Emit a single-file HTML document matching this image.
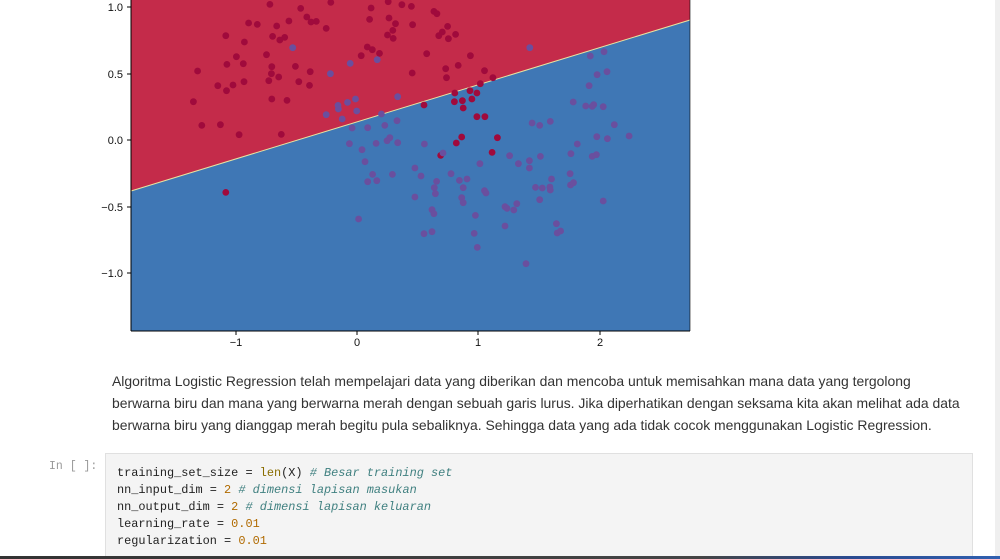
<!DOCTYPE html>
<html style="overflow:hidden;height:559px"><head><meta charset="utf-8"><style>
body{margin:0;width:1000px;height:559px;overflow:hidden;background:#fff;position:relative;font-family:"Liberation Sans",sans-serif}
.p{position:absolute;left:112px;top:370px;width:880px;font-size:13.95px;line-height:22px;color:#333;white-space:nowrap}
.cell{position:absolute;left:105px;top:453px;width:866px;height:104px;background:#f4f4f4;border:1px solid #e0e0e0;border-bottom:none}
pre{margin:0;position:absolute;left:11px;top:11px;font-family:"Liberation Mono",monospace;font-size:11.9px;line-height:17px;color:#222}
.c{color:#408080;font-style:italic}.n{color:#b06a00}.b{color:#8a6d00}
</style></head><body>
<svg width="700" height="350" style="position:absolute;left:0;top:0">
<polygon points="131,0 690,0 690,20 131,191" fill="#c42b4a"/>
<polygon points="131,191 690,20 690,331 131,331" fill="#3f77b5"/>
<line x1="131" y1="191" x2="690" y2="20" stroke="#e8e4a0" stroke-width="1"/>
<g id="pts"></g>
<line x1="131" y1="0" x2="131" y2="331" stroke="#000"/>
<line x1="131" y1="331" x2="690" y2="331" stroke="#000"/>
<line x1="690" y1="0" x2="690" y2="331" stroke="#000" stroke-width=".6"/>
<g stroke="#000"><line x1="236" y1="331" x2="236" y2="335"/><line x1="357" y1="331" x2="357" y2="335"/><line x1="478" y1="331" x2="478" y2="335"/><line x1="600" y1="331" x2="600" y2="335"/>
<line x1="127" y1="7" x2="131" y2="7"/><line x1="127" y1="74" x2="131" y2="74"/><line x1="127" y1="140" x2="131" y2="140"/><line x1="127" y1="207" x2="131" y2="207"/><line x1="127" y1="273" x2="131" y2="273"/></g>
<g font-family="Liberation Sans" font-size="11" fill="#111">
<text x="123" y="11" text-anchor="end">1.0</text><text x="123" y="78" text-anchor="end">0.5</text><text x="123" y="144" text-anchor="end">0.0</text><text x="123" y="211" text-anchor="end">−0.5</text><text x="123" y="277" text-anchor="end">−1.0</text>
<text x="236" y="346" text-anchor="middle">−1</text><text x="357" y="346" text-anchor="middle">0</text><text x="478" y="346" text-anchor="middle">1</text><text x="600" y="346" text-anchor="middle">2</text></g>
</svg>
<div class="p">Algoritma Logistic Regression telah mempelajari data yang diberikan dan mencoba untuk memisahkan mana data yang tergolong<br>berwarna biru dan mana yang berwarna merah dengan sebuah garis lurus. Jika diperhatikan dengan seksama kita akan melihat ada data<br>berwarna biru yang dianggap merah begitu pula sebaliknya. Sehingga data yang ada tidak cocok menggunakan Logistic Regression.</div>
<div style="position:absolute;left:49px;top:460px;font-family:'Liberation Mono',monospace;font-size:11.5px;color:#999">In [ ]:</div>
<div class="cell"><pre>training_set_size = <span class="b">len</span>(X) <span class="c"># Besar training set</span>
nn_input_dim = <span class="n">2</span> <span class="c"># dimensi lapisan masukan</span>
nn_output_dim = <span class="n">2</span> <span class="c"># dimensi lapisan keluaran</span>
learning_rate = <span class="n">0.01</span>
regularization = <span class="n">0.01</span></pre></div>
<div style="position:absolute;right:0;top:0;width:5px;height:559px;background:#efefef"></div>
<div style="position:absolute;left:0;top:556px;width:1000px;height:3px;background:linear-gradient(90deg,#333 0,#444 70%,#2a4a90 85%,#3060b0)"></div>
<script>
var R=[[441,14],[522,26],[601,8],[752,6],[788,15],[813,20],[707,25],[872,35],[880,42],[385,70],[408,74],[459,79],[491,64],[538,52],[549,67],[563,65],[589,86],[703,59],[754,55],[771,72],[764,92],[750,106],[765,116],[816,75],[908,80],[885,108],[894,97],[910,117],[929,104],[325,108],[448,110],[467,121],[480,113],[374,127],[432,165],[353,171],[328,194],[371,192],[446,201],[445,222],[508,200],[547,216],[251,214],[710,150],[697,142],[681,168],[729,161],[853,162],[968,168],[903,207],[905,234],[936,197],[815,220],[1005,213],[1027,234],[994,252],[373,246],[344,256],[304,258],[327,273],[438,243],[464,232],[517,246],[545,257],[446,298],[486,302],[240,306],[262,377],[311,375],[360,405],[471,404],[927,280],[926,306],[947,303],[949,325],[967,273],[972,298],[985,280],[846,316],[985,351],[1006,351],[945,412],[931,430],[1039,414],[1025,458],[890,467],[325,578]];
var B=[[501,144],[652,191],[723,180],[600,222],[1124,144],[777,291],[666,298],[645,308],[620,317],[621,328],[669,334],[589,345],[631,358],[734,343],[657,385],[698,384],[743,377],[775,363],[650,432],[683,450],[720,431],[749,423],[756,414],[777,429],[847,433],[896,460],[691,486],[711,524],[698,546],[722,543],[763,524],[822,505],[838,529],[879,545],[873,564],[876,582],[917,522],[939,542],[959,538],[949,564],[945,594],[949,609],[822,592],[867,630],[872,642],[846,702],[867,696],[674,658],[981,647],[978,701],[986,743],[993,492],[1005,573],[1009,580],[1059,621],[1064,626],[1082,631],[1090,612],[1059,679],[1114,792],[1071,468],[1094,492],[1123,483],[1123,505],[1152,470],[1139,563],[1157,565],[1177,562],[1178,571],[1181,538],[1150,600],[1194,672],[1196,700],[1205,694],[1130,370],[1150,377],[1178,365],[1232,462],[1249,433],[1230,522],[1231,556],[1239,549],[1317,604],[1288,470],[1299,465],[1300,411],[1328,417],[1385,409],[1346,375],[1271,319],[1292,315],[1288,320],[1317,321],[1238,307],[1280,258],[1301,225],[1327,216],[1283,169],[1319,156]];
var g=document.getElementById('pts'),s='';
function add(a,c){a.forEach(function(p){s+='<circle cx="'+(p[0]*0.3805+102.1).toFixed(1)+'" cy="'+(p[1]/3-0.3).toFixed(1)+'" r="3.4" fill="'+c+'"/>';});}
add(R,'#a00a3c');add(B,'#6a4f9e');g.innerHTML=s;
</script>
</body></html>
